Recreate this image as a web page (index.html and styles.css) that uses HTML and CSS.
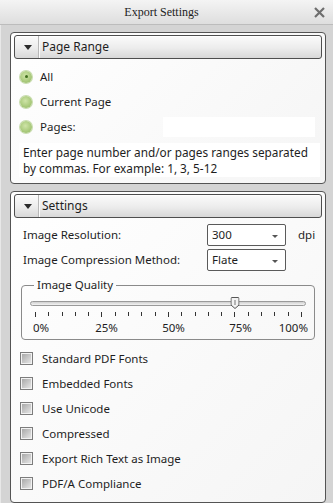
FILE: index.html
```html
<!DOCTYPE html>
<html lang="en">
<head>
    <meta charset="UTF-8">
    <meta name="viewport" content="width=device-width, initial-scale=1.0">
    <title>Export Settings</title>
    <link rel="stylesheet" href="styles.css">
</head>
<body>
    <div class="window">
        <div class="titlebar">
            <span class="title">Export Settings</span>
            <svg class="close" width="11" height="11" viewBox="0 0 11 11">
                <path d="M1 1 L10 10 M10 1 L1 10" stroke="#6e6e6e" stroke-width="2.2" fill="none"/>
            </svg>
        </div>

        <div class="content">
            <section class="panel">
                <div class="panel-head">
                    <span class="caret"><span class="tri"></span></span>
                    <span class="panel-title">Page Range</span>
                </div>
                <div class="panel-body range">
                    <div class="radio-row">
                        <span class="radio checked"></span>
                        <span>All</span>
                    </div>
                    <div class="radio-row">
                        <span class="radio"></span>
                        <span>Current Page</span>
                    </div>
                    <div class="radio-row">
                        <span class="radio"></span>
                        <span>Pages:</span>
                        <span class="pages-input"></span>
                    </div>
                    <p class="hint">Enter page number and/or pages ranges separated by commas. For example: 1, 3, 5-12</p>
                </div>
            </section>

            <section class="panel settings">
                <div class="panel-head">
                    <span class="caret"><span class="tri"></span></span>
                    <span class="panel-title">Settings</span>
                </div>
                <div class="panel-body">
                    <div class="field-row">
                        <span class="field-label">Image Resolution:</span>
                        <span class="dropdown">300<span class="arrow"></span></span>
                        <span class="unit">dpi</span>
                    </div>
                    <div class="field-row">
                        <span class="field-label">Image Compression Method:</span>
                        <span class="dropdown">Flate<span class="arrow"></span></span>
                    </div>

                    <fieldset class="quality">
                        <legend>Image Quality</legend>
                        <div class="slider">
                            <div class="track"></div>
                            <div class="thumb-lane">
                                <svg class="thumb" style="left: 75%;" width="9" height="12" viewBox="0 0 9 12">
                                    <path d="M0.5 1.5 Q0.5 0.5 1.5 0.5 L7.5 0.5 Q8.5 0.5 8.5 1.5 L8.5 8 L4.5 11.5 L0.5 8 Z" fill="#f2f2f2" stroke="#555"/>
                                    <path d="M4.5 3 L4.5 8" stroke="#777"/>
                                </svg>
                            </div>
                        </div>
                        <div class="ticks">
                            <span class="tick major"></span><span class="tick"></span><span class="tick"></span><span class="tick"></span><span class="tick"></span>
                            <span class="tick major"></span><span class="tick"></span><span class="tick"></span><span class="tick"></span><span class="tick"></span>
                            <span class="tick major"></span><span class="tick"></span><span class="tick"></span><span class="tick"></span><span class="tick"></span>
                            <span class="tick major"></span><span class="tick"></span><span class="tick"></span><span class="tick"></span><span class="tick"></span>
                            <span class="tick major"></span>
                        </div>
                        <div class="tick-labels">
                            <span>0%</span>
                            <span>25%</span>
                            <span>50%</span>
                            <span>75%</span>
                            <span>100%</span>
                        </div>
                    </fieldset>

                    <div class="check-row"><span class="checkbox"></span><span>Standard PDF Fonts</span></div>
                    <div class="check-row"><span class="checkbox"></span><span>Embedded Fonts</span></div>
                    <div class="check-row"><span class="checkbox"></span><span>Use Unicode</span></div>
                    <div class="check-row"><span class="checkbox"></span><span>Compressed</span></div>
                    <div class="check-row"><span class="checkbox"></span><span>Export Rich Text as Image</span></div>
                    <div class="check-row"><span class="checkbox"></span><span>PDF/A Compliance</span></div>
                </div>
            </section>
        </div>
    </div>
</body>
</html>
```

FILE: styles.css
```css
body {
    margin: 0;
    font-family: "Noto Sans", "DejaVu Sans", sans-serif;
    font-size: 11.5px;
    line-height: 14px;
    color: #1e1e1e;
    background-color: #d4d4d4;
}
.window {
    width: 333px;
    height: 503px;
    overflow: hidden;
    background-color: #d4d4d4;
}
.titlebar {
    height: 24px;
    display: flex;
    align-items: center;
    border-bottom: 1px solid #bcbcbc;
    background: linear-gradient(#f4f4f4, #dedede);
}
.title {
    flex: 1;
    text-align: center;
    padding-left: 9px;
    font-family: "Liberation Serif", "Times New Roman", serif;
    font-size: 12px;
    color: #222;
}
.close {
    margin-right: 8px;
}
.content {
    padding: 7px 7px 0 9px;
    border-left: 1px solid #e8e8e8;
}
.panel {
    border: 1px solid #545454;
    border-radius: 4px;
    background: linear-gradient(135deg, #ffffff, #f5f5f5);
    padding-bottom: 6px;
}
.panel.settings {
    margin-top: 7px;
}
.panel-head {
    height: 22px;
    margin: 2px 3px 0 3px;
    display: flex;
    align-items: center;
    border: 1px solid #4e4e4e;
    border-radius: 3px;
    background: linear-gradient(#fbfbfb, #ececec 55%, #d8d8d8);
    box-shadow: inset 0 1px 0 #ffffff;
    font-size: 12px;
}
.caret {
    width: 23px;
    height: 100%;
    display: flex;
    align-items: center;
    justify-content: center;
    border-right: 1px solid #b8b8b8;
    box-shadow: 1px 0 0 #fafafa;
}
.tri {
    width: 0;
    height: 0;
    margin-left: 2px;
    border-left: 4px solid transparent;
    border-right: 4px solid transparent;
    border-top: 5px solid #2a2a2a;
}
.panel-title {
    padding-left: 3px;
}
.panel-body {
    padding-top: 5px;
}
.radio-row {
    height: 25px;
    display: flex;
    align-items: center;
    padding-left: 9px;
    gap: 8px;
}
.radio {
    width: 12px;
    height: 12px;
    border-radius: 50%;
    background: radial-gradient(circle at 45% 40%, #cfe4a8, #a8c97a 60%, #90b362);
    box-shadow: 0 0 0 1px #c8dcae;
    display: flex;
    align-items: center;
    justify-content: center;
}
.radio.checked::after {
    content: "";
    width: 3px;
    height: 3px;
    border-radius: 50%;
    background-color: #3f6d1d;
}
.pages-input {
    width: 152px;
    height: 20px;
    margin-left: auto;
    margin-right: 10px;
    background-color: #ffffff;
}
.hint {
    margin: 4px 5px 0 8px;
    padding: 1px 4px;
    background-color: #ffffff;
    font-size: 11.8px;
    line-height: 16px;
}
.settings .panel-body {
    padding-top: 6px;
}
.field-row {
    height: 22px;
    display: flex;
    align-items: center;
    padding-left: 12px;
    margin-bottom: 3px;
}
.field-label {
    width: 184px;
}
.dropdown {
    width: 73px;
    height: 20px;
    display: flex;
    align-items: center;
    padding-left: 4px;
    border: 1px solid #5a5a5a;
    border-radius: 2px;
    background-color: #ffffff;
}
.arrow {
    margin-left: auto;
    margin-right: 7px;
    margin-top: 3px;
    border-left: 3px solid transparent;
    border-right: 3px solid transparent;
    border-top: 3px solid #555;
}
.unit {
    margin-left: 12px;
}
.quality {
    margin: 7px 10px 0 10px;
    padding: 0 8px 4px 8px;
    border: 1px solid #8a8a8a;
    border-radius: 4px;
}
.quality legend {
    margin-left: 4px;
    padding: 0 3px;
}
.slider {
    position: relative;
    height: 12px;
    margin-top: 5px;
    display: flex;
    align-items: center;
}
.track {
    width: 100%;
    height: 3px;
    border: 1px solid #9a9a9a;
    border-radius: 3px;
    background: linear-gradient(#cfcfcf, #f4f4f4);
}
.thumb-lane {
    position: absolute;
    left: 5px;
    right: 4px;
    top: 0;
    bottom: 0;
}
.thumb {
    position: absolute;
    top: 0;
    transform: translateX(-50%);
}
.ticks {
    display: flex;
    justify-content: space-between;
    align-items: flex-start;
    height: 6px;
    margin: 3px 4px 0 5px;
}
.tick {
    width: 1px;
    height: 4px;
    background-color: #333;
}
.tick.major {
    height: 5px;
}
.tick-labels {
    display: grid;
    grid-template-columns: 40px 67px 67px 67px 1fr;
    margin: 3px -2px 0 3px;
}
.tick-labels span {
    text-align: center;
}
.tick-labels span:first-child {
    text-align: left;
}
.tick-labels span:last-child {
    text-align: right;
}
.check-row {
    height: 25px;
    display: flex;
    align-items: center;
    padding-left: 9px;
    gap: 9px;
}
.quality + .check-row {
    margin-top: 6px;
}
.checkbox {
    width: 11px;
    height: 11px;
    border: 1px solid #7c7c7c;
    background: linear-gradient(135deg, #a2a2a2, #ececec);
    box-shadow: inset 0 0 0 1px #f2f2f2;
}
```
